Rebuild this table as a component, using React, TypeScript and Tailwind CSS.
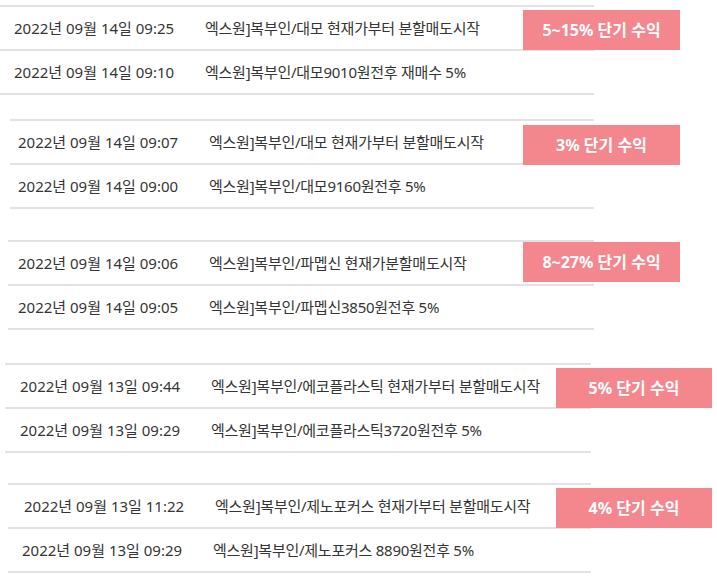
import React from "react";

type Row = { date: string; title: string; dx?: string };
type Group = {
  mt: string;
  ml: string;
  w: string;
  pl: string;
  badge: string;
  badgePos: string;
  rows: Row[];
};

const groups: Group[] = [
  {
    mt: "mt-[5px]",
    ml: "ml-0",
    w: "w-[594px]",
    pl: "pl-[14px]",
    badge: "5~15% 단기 수익",
    badgePos: "left-[523px] top-[3px] w-[157px]",
    rows: [
      { date: "2022년 09월 14일 09:25", title: "엑스원]복부인/대모 현재가부터 분할매도시작" },
      { date: "2022년 09월 14일 09:10", title: "엑스원]복부인/대모9010원전후 재매수 5%" },
    ],
  },
  {
    mt: "mt-[24px]",
    ml: "ml-[10px]",
    w: "w-[584px]",
    pl: "pl-[8px]",
    badge: "3% 단기 수익",
    badgePos: "left-[513px] top-[4px] w-[157px]",
    rows: [
      { date: "2022년 09월 14일 09:07", title: "엑스원]복부인/대모 현재가부터 분할매도시작" },
      { date: "2022년 09월 14일 09:00", title: "엑스원]복부인/대모9160원전후 5%" },
    ],
  },
  {
    mt: "mt-[31px]",
    ml: "ml-[8px]",
    w: "w-[586px]",
    pl: "pl-[10px]",
    badge: "8~27% 단기 수익",
    badgePos: "left-[515px] top-[0px] w-[157px]",
    rows: [
      { date: "2022년 09월 14일 09:06", title: "엑스원]복부인/파멥신 현재가분할매도시작" },
      { date: "2022년 09월 14일 09:05", title: "엑스원]복부인/파멥신3850원전후 5%" },
    ],
  },
  {
    mt: "mt-[33px]",
    ml: "ml-[5px]",
    w: "w-[586px]",
    pl: "pl-[15px]",
    badge: "5% 단기 수익",
    badgePos: "left-[551px] top-[3px] w-[156px]",
    rows: [
      { date: "2022년 09월 13일 09:44", title: "엑스원]복부인/에코플라스틱 현재가부터 분할매도시작" },
      { date: "2022년 09월 13일 09:29", title: "엑스원]복부인/에코플라스틱3720원전후 5%" },
    ],
  },
  {
    mt: "mt-[30px]",
    ml: "ml-[8px]",
    w: "w-[583px]",
    pl: "pl-[14px]",
    badge: "4% 단기 수익",
    badgePos: "left-[548px] top-[3px] w-[156px]",
    rows: [
      { date: "2022년 09월 13일 11:22", title: "엑스원]복부인/제노포커스 현재가부터 분할매도시작", dx: "ml-[2px]" },
      { date: "2022년 09월 13일 09:29", title: "엑스원]복부인/제노포커스 8890원전후 5%" },
    ],
  },
];

export default function App() {
  return (
    <div
      className="w-[717px] h-[582px] bg-white overflow-hidden text-[#353535]"
      style={{ fontFamily: '"Noto Sans", "Noto Sans CJK KR", sans-serif' }}
    >
      {groups.map((g, i) => (
        <div key={i} className={`relative ${g.mt} ${g.ml} ${g.w} border-t-2 border-[#e2e2e2]`}>
          {g.rows.map((r, j) => (
            <div
              key={j}
              className={`h-[44px] flex items-center border-b-2 border-[#e2e2e2] ${g.pl} text-[15px] whitespace-nowrap`}
            >
              <div className={`w-[191px] shrink-0 ${r.dx ?? ""}`}>{r.date}</div>
              <div className="tracking-[-0.25px]">{r.title}</div>
            </div>
          ))}
          <div
            className={`absolute ${g.badgePos} h-[40px] bg-[#f4868e] text-white font-bold text-[16px] flex items-center justify-center whitespace-nowrap`}
          >
            {g.badge}
          </div>
        </div>
      ))}
    </div>
  );
}
